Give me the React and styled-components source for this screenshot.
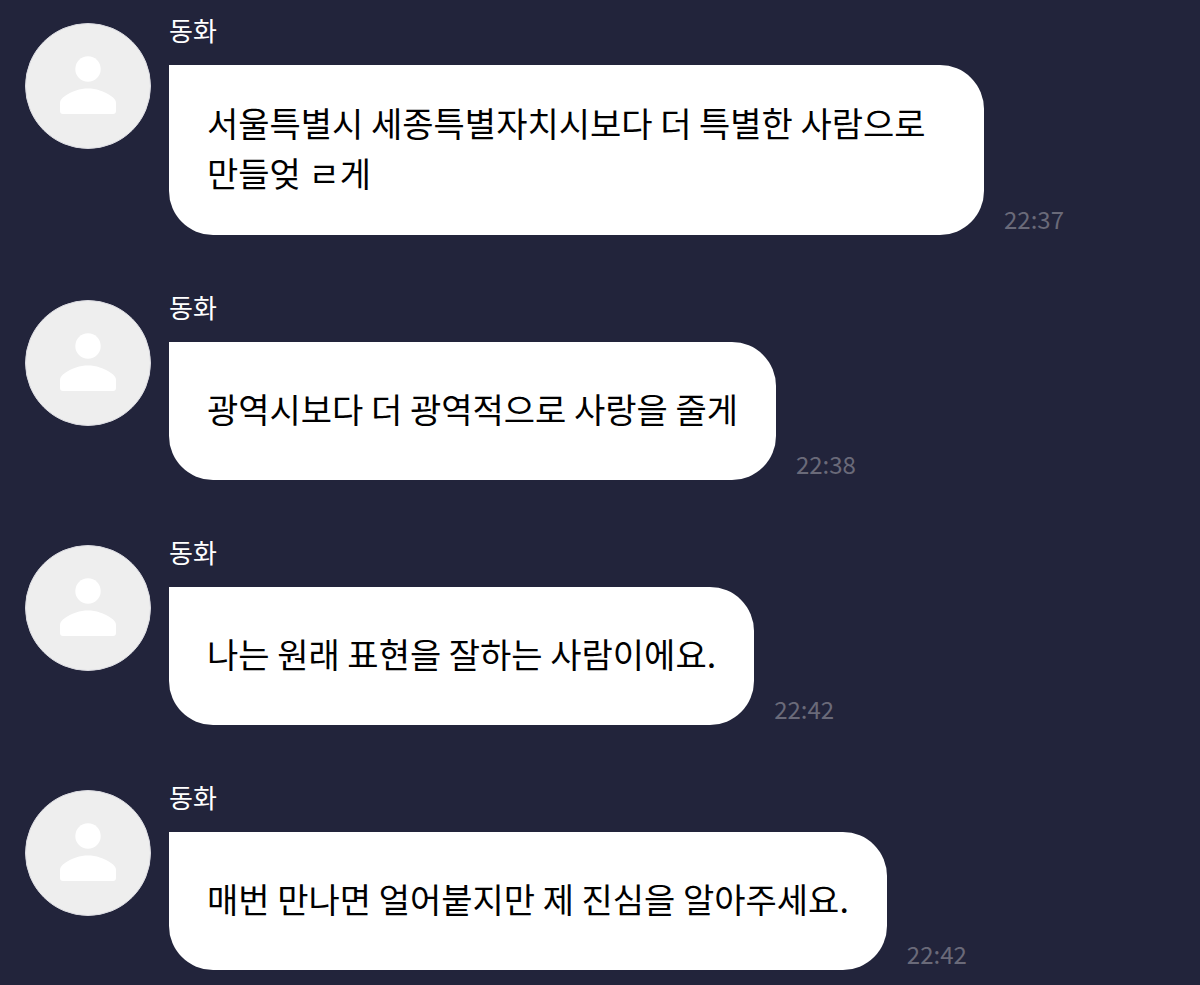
import React from "react";
import styled, { createGlobalStyle } from "styled-components";

const GlobalStyle = createGlobalStyle`
  *, *::before, *::after { box-sizing: border-box; }
  html { background: #22243b; }
  body {
    margin: 0;
    background: #22243b;
    font-family: "Noto Sans CJK KR", "Noto Sans", sans-serif;
    word-break: keep-all;
  }
`;

const Chat = styled.main`
  min-height: 100vh;
  padding: 13px 25px 15px;
`;

const MessageList = styled.ul`
  display: flex;
  flex-direction: column;
  gap: 55px;
  margin: 0;
  padding: 0;
  list-style: none;
`;

const Message = styled.li`
  display: flex;
  align-items: flex-start;
  gap: 18px;
`;

const Avatar = styled.div`
  flex: none;
  width: 126px;
  height: 126px;
  margin-top: 10px;
  border: 1px solid #dcdce2;
  border-radius: 50%;
  background: #eeeeee;
  overflow: hidden;

  svg {
    display: block;
    width: 100%;
    height: 100%;
  }
`;

const Body = styled.div`
  flex: 1;
  min-width: 0;
`;

const Sender = styled.div`
  margin-bottom: 18px;
  color: #ffffff;
  font-size: 26px;
  line-height: 34px;
`;

const Line = styled.div`
  display: flex;
  align-items: flex-end;
  gap: 20px;
`;

const Bubble = styled.p`
  display: flex;
  align-items: center;
  max-width: 815px;
  min-height: 138px;
  margin: 0;
  padding: 33px 38px 37px;
  border-radius: 0 44px 44px 44px;
  background: #ffffff;
  color: #000000;
  font-size: 34px;
  line-height: 50px;
`;

const Time = styled.time`
  flex: none;
  color: #6a6a79;
  font-size: 24px;
  line-height: 32px;
`;

const messages = [
  { text: "서울특별시 세종특별자치시보다 더 특별한 사람으로 만들엊 ㄹ게", time: "22:37" },
  { text: "광역시보다 더 광역적으로 사랑을 줄게", time: "22:38" },
  { text: "나는 원래 표현을 잘하는 사람이에요.", time: "22:42" },
  { text: "매번 만나면 얼어붙지만 제 진심을 알아주세요.", time: "22:42" },
];

function PersonIcon() {
  return (
    <svg viewBox="0 0 124 124" fill="#ffffff" aria-hidden="true">
      <circle cx="62" cy="45" r="12.7" />
      <path d="M34 79C34 76 36 74 39 72C46 67 54 64.500 62 64.500S78 67 85 72C88 74 90 76 90 79V87Q90 90 87 90H37Q34 90 34 87Z" />
    </svg>
  );
}

export default function App() {
  return (
    <>
      <GlobalStyle />
      <Chat>
        <MessageList>
          {messages.map(({ text, time }) => (
            <Message key={text}>
              <Avatar>
                <PersonIcon />
              </Avatar>
              <Body>
                <Sender>동화</Sender>
                <Line>
                  <Bubble>{text}</Bubble>
                  <Time dateTime={time}>{time}</Time>
                </Line>
              </Body>
            </Message>
          ))}
        </MessageList>
      </Chat>
    </>
  );
}
